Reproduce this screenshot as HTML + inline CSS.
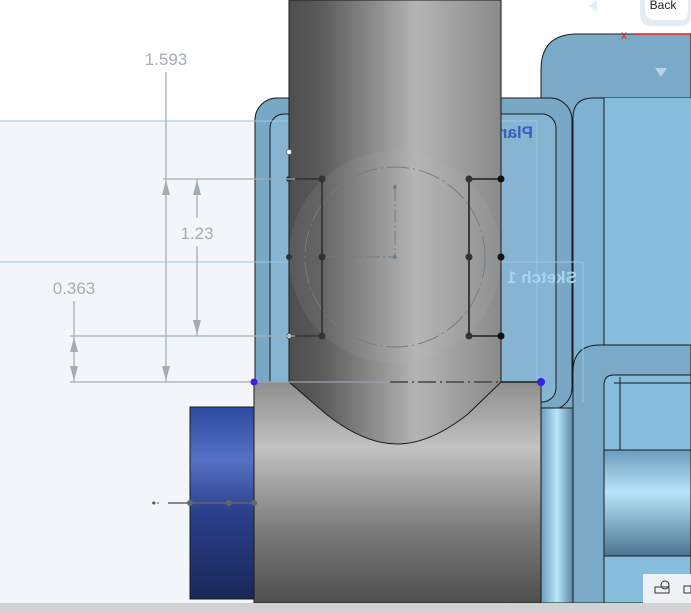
<!DOCTYPE html>
<html><head><meta charset="utf-8"><style>
html,body{margin:0;padding:0;width:691px;height:613px;overflow:hidden;background:#fff}
svg{display:block}
text{font-family:"Liberation Sans",sans-serif}
</style></head><body>
<svg width="691" height="613" viewBox="0 0 691 613" xmlns="http://www.w3.org/2000/svg">
<defs>
<linearGradient id="pole" x1="0" x2="1" y1="0" y2="0">
<stop offset="0" stop-color="#4e4e4e"/><stop offset="0.15" stop-color="#5a5a5a"/><stop offset="0.6" stop-color="#b4b4b4"/><stop offset="1" stop-color="#8a8a8a"/></linearGradient>
<linearGradient id="blk" x1="0" x2="0" y1="0" y2="1">
<stop offset="0" stop-color="#8e8e8e"/><stop offset="0.3" stop-color="#c2c2c2"/><stop offset="0.65" stop-color="#7e7e7e"/><stop offset="1" stop-color="#4e4e4e"/></linearGradient>
<linearGradient id="bcyl" x1="0" x2="0" y1="0" y2="1">
<stop offset="0" stop-color="#2e4aa0"/><stop offset="0.28" stop-color="#5672c4"/><stop offset="0.55" stop-color="#2a3f8a"/><stop offset="1" stop-color="#1a2758"/></linearGradient>
<linearGradient id="hcyl" x1="0" x2="0" y1="0" y2="1">
<stop offset="0" stop-color="#6a9cbc"/><stop offset="0.4" stop-color="#b8e4fa"/><stop offset="1" stop-color="#4a7490"/></linearGradient>
<linearGradient id="vhl" x1="0" x2="1" y1="0" y2="0">
<stop offset="0" stop-color="#6c9cbc"/><stop offset="0.5" stop-color="#b8e6fc"/><stop offset="1" stop-color="#5a88a6"/></linearGradient>
</defs>
<rect width="691" height="613" fill="#fff"/>
<rect x="0" y="121" width="540" height="482" fill="#f2f6fa"/>
<path d="M541 603 V70 Q541 34 577 34 H691 V603 Z" fill="#7aaac8" stroke="#1a1a1a" stroke-width="1"/>
<polygon points="655,68 667,68 661,77" fill="#b8d4e6"/>
<path d="M573 603 V118 Q573 98 593 98 H691 V603 Z" fill="#7eb2d2" stroke="#1a1a1a"/>
<rect x="604" y="98" width="87" height="250" fill="#86bcdc"/>
<line x1="604" y1="98" x2="604" y2="348" stroke="#1a1a1a"/>
<path d="M573 603 V372 Q573 345 600 345 H691 V603 Z" fill="#7aaac8" stroke="#1a1a1a"/>
<path d="M604 603 V385 Q604 375 614 375 H691 V603 Z" fill="#86bcdc" stroke="#1a1a1a"/>
<line x1="620" y1="377" x2="620" y2="450" stroke="#1a1a1a"/>
<line x1="614" y1="383" x2="691" y2="383" stroke="#1a1a1a"/>
<rect x="604" y="450" width="87" height="106" fill="url(#hcyl)" stroke="#1a1a1a"/>
<rect x="255" y="98" width="317" height="312" rx="22" fill="#78a8c6" stroke="#1a1a1a"/>
<rect x="270" y="114" width="286" height="288" rx="14" fill="#86b4d2" stroke="#1a1a1a"/>
<rect x="541" y="408" width="32" height="195" fill="url(#vhl)" stroke="#1a1a1a"/>
<!-- plane lines -->
<line x1="0" y1="121" x2="537" y2="121" stroke="#9cc6e6"/>
<line x1="537" y1="121" x2="537" y2="382" stroke="#9cc6e6"/>
<line x1="0" y1="262" x2="583" y2="262" stroke="#9cc6e6"/>
<line x1="583" y1="262" x2="583" y2="402" stroke="#9cc6e6"/>
<text x="0" y="0" transform="translate(533,138) scale(-1,1)" font-size="17" font-weight="bold" fill="#3a5fc0">Plan</text>
<text x="0" y="0" transform="translate(577,283) scale(-1,1)" font-size="17" font-weight="bold" fill="#a8d4f0">Sketch 1</text>
<rect x="190" y="407" width="64" height="192" fill="url(#bcyl)" stroke="#1a1a1a"/>
<rect x="254" y="382" width="287" height="221" fill="url(#blk)" stroke="#1a1a1a"/>
<path d="M289 0 H501 V382 L468 414 Q430 444 397 444 Q364 444 326 414 L289 382 Z" fill="url(#pole)" stroke="#1a1a1a"/>
<circle cx="395" cy="257" r="106" fill="#c8c8c8" opacity="0.1"/>
<circle cx="395" cy="257" r="90" fill="none" stroke="#6e7e8c" stroke-width="1" stroke-dasharray="22,4,2,4"/>
<line x1="395" y1="187" x2="395" y2="257" stroke="#6e7e8c" stroke-dasharray="14,3,2,3"/>
<line x1="322" y1="257" x2="395" y2="257" stroke="#6e7e8c" stroke-dasharray="14,3,2,3"/>
<circle cx="395" cy="187" r="2" fill="#6e7e8c"/><circle cx="395" cy="257" r="2" fill="#6e7e8c"/>
<g stroke="#3a3a3a" stroke-width="2" fill="none">
<polyline points="289,179 322,179 322,336 289,336"/>
<polyline points="501,179 469,179 469,336 501,336"/>
</g>
<g fill="#333">
<circle cx="322" cy="179" r="3.5"/><circle cx="322" cy="257" r="3.5"/><circle cx="322" cy="336" r="3.5"/>
<circle cx="469" cy="179" r="3.5"/><circle cx="469" cy="257" r="3.5"/><circle cx="469" cy="336" r="3.5"/>
<circle cx="501" cy="179" r="3.5" fill="#111"/><circle cx="501" cy="257" r="3.5" fill="#111"/><circle cx="501" cy="336" r="3.5" fill="#111"/>
<circle cx="289" cy="179" r="3"/><circle cx="289" cy="257" r="3"/>
</g>
<circle cx="289" cy="152" r="2.5" fill="#fff" stroke="#777"/>
<circle cx="289" cy="336" r="2.5" fill="#ddd" stroke="#555"/>
<g stroke="#a4adb6" stroke-width="1.3" fill="#a4adb6">
<line x1="163" y1="179" x2="295" y2="179"/>
<line x1="70" y1="336" x2="295" y2="336"/>
<line x1="70" y1="382" x2="254" y2="382"/>
<line x1="166" y1="72" x2="166" y2="382"/>
<line x1="197" y1="179" x2="197" y2="218"/><line x1="197" y1="246" x2="197" y2="336"/>
<line x1="74" y1="301" x2="74" y2="382"/>
<polygon points="166,180 162,195 170,195" stroke="none"/>
<polygon points="166,381 162,366 170,366" stroke="none"/>
<polygon points="197,180 193,195 201,195" stroke="none"/>
<polygon points="197,335 193,320 201,320" stroke="none"/>
<polygon points="74,337 70,352 78,352" stroke="none"/>
<polygon points="74,381 70,366 78,366" stroke="none"/>
</g>
<g fill="#a4adb6" font-size="17" text-anchor="middle">
<text x="166" y="65">1.593</text>
<text x="197" y="239">1.23</text>
<text x="74" y="294">0.363</text>
</g>
<line x1="254" y1="382" x2="390" y2="382" stroke="#9aa4ae" stroke-width="1.3"/>
<line x1="390" y1="382" x2="501" y2="382" stroke="#444" stroke-width="1.5" stroke-dasharray="18,4,2,4"/>
<line x1="501" y1="382" x2="541" y2="382" stroke="#1a1a1a" stroke-width="1.5"/>
<circle cx="254" cy="382" r="3.5" fill="#3a1ee8"/>
<circle cx="541" cy="382" r="4" fill="#3a1ee8"/>
<line x1="152" y1="503" x2="160" y2="503" stroke="#555" stroke-dasharray="2,3"/>
<circle cx="154" cy="503" r="1.5" fill="#555"/>
<line x1="168" y1="503" x2="254" y2="503" stroke="#5a6670" stroke-width="1.5"/>
<circle cx="190" cy="503" r="3" fill="#5a6670"/><circle cx="229" cy="503" r="3" fill="#5a6670"/><circle cx="254" cy="503" r="3" fill="#5a6670"/>
<path d="M640 0 V14 Q640 26 652 26 H680 Q691 26 691 14 V0 Z" fill="#e4ecf3"/>
<path d="M645 0 V9 Q645 20 656 20 H682 Q688 20 688 9 V0 Z" fill="#fff"/>
<text x="663" y="9" font-size="12" fill="#222" text-anchor="middle">Back</text>
<polygon points="597,0 597,12 589,6" fill="#e4ecf3"/>
<line x1="634" y1="34" x2="691" y2="34" stroke="#e02020" stroke-width="1.5"/>
<text x="624" y="39" font-size="12" fill="#e02020" text-anchor="middle">x</text>
<rect x="643" y="574" width="48" height="29" fill="#eef2f6"/>
<g stroke="#333" stroke-width="1" fill="none">
<rect x="655" y="587" width="14" height="6"/><circle cx="665" cy="585" r="4"/>
<rect x="684" y="586" width="7" height="7"/>
</g>
<rect x="0" y="603" width="691" height="10" fill="#d2d2d2"/>
</svg>
</body></html>
